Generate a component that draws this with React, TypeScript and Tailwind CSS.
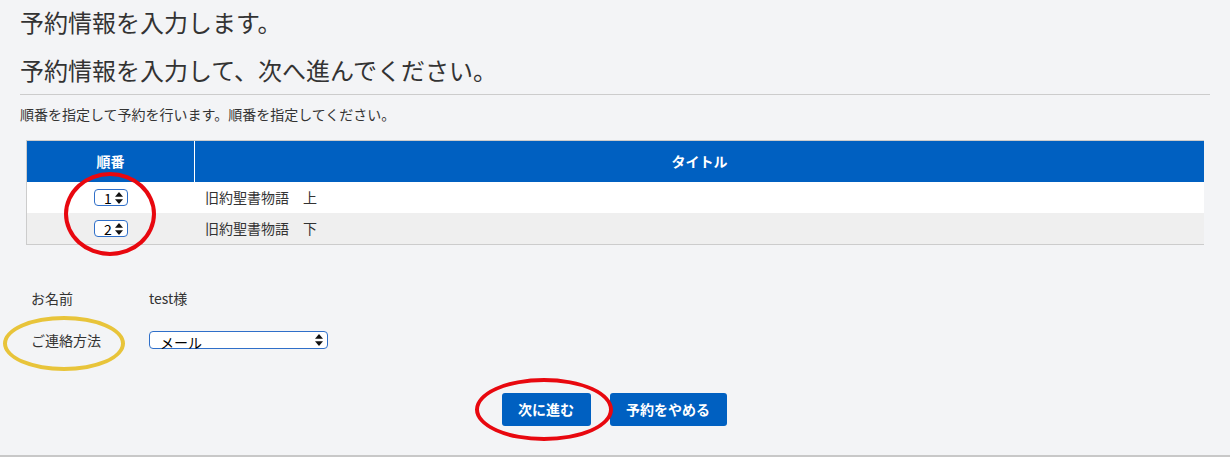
import React from 'react';

const font = { fontFamily: '"Noto Sans CJK JP", "Noto Sans", sans-serif' };

function UpDown() {
  return (
    <svg width="8" height="12" viewBox="0 0 8 12" className="shrink-0">
      <path d="M4 0 L8 4.8 L0 4.8 Z" fill="#111" />
      <path d="M4 12 L8 7.2 L0 7.2 Z" fill="#111" />
    </svg>
  );
}

function OrderSelect({ value }: { value: string }) {
  return (
    <div className="mx-auto flex h-[17px] w-[34px] items-center justify-between rounded-[4px] border border-[#2f6fc9] bg-white pl-[9px] pr-[4px]">
      <span className="text-[14px] leading-none text-black">{value}</span>
      <UpDown />
    </div>
  );
}

const rows = [
  { no: '1', title: '旧約聖書物語　上', bg: 'bg-white' },
  { no: '2', title: '旧約聖書物語　下', bg: 'bg-[#efefef]' },
];

export default function App() {
  return (
    <div className="relative h-[457px] w-[1230px] overflow-hidden bg-[#f3f4f6] text-[#333]" style={font}>
      <div className="px-[20px]">
        <h1 className="pt-[6px] text-[24px] leading-[32px]">予約情報を入力します。</h1>
        <h2 className="mt-[16px] text-[24px] leading-[32px]">予約情報を入力して、次へ進んでください。</h2>
        <div className="mt-[8px] h-px w-[1190px] bg-[#cccccc]" />
        <p className="mt-[10px] text-[14px] leading-[19px]">順番を指定して予約を行います。順番を指定してください。</p>

        {/* 予約テーブル */}
        <div className="ml-[6px] mt-[16px] w-[1178px] border-y border-l border-[#cccccc]">
          <div className="flex h-[41px] bg-[#0060c1] text-[14px] font-bold text-white">
            <div className="flex w-[168px] items-center justify-center border-r border-white">順番</div>
            <div className="flex flex-1 items-center justify-center">タイトル</div>
          </div>
          {rows.map((r) => (
            <div key={r.no} className={`flex h-[31px] items-center text-[14px] ${r.bg}`}>
              <div className="w-[168px]">
                <OrderSelect value={r.no} />
              </div>
              <div className="pl-[10px]">{r.title}</div>
            </div>
          ))}
        </div>

        {/* 入力欄 */}
        <div className="ml-[11px] mt-[43px] text-[14px]">
          <div className="flex h-[20px] items-center">
            <span className="w-[118px]">お名前</span>
            <span>test様</span>
          </div>
          <div className="mt-[22px] flex h-[20px] items-center">
            <span className="w-[118px]">ご連絡方法</span>
            <div className="flex h-[18px] w-[179px] items-end justify-between rounded-[4px] border border-[#2f6fc9] bg-white pl-[10px] pr-[4px]">
              <span className="translate-y-[3px] text-[14px] leading-[18px] text-black">メール</span>
              <span className="self-center"><UpDown /></span>
            </div>
          </div>
        </div>

        <div className="mt-[43px] flex justify-center gap-[19px] pr-[2px]">
          <button className="h-[33px] w-[89px] rounded-[3px] bg-[#0060c1] text-[14px] font-bold text-white">次に進む</button>
          <button className="h-[33px] w-[117px] rounded-[3px] bg-[#0060c1] text-[14px] font-bold text-white">予約をやめる</button>
        </div>
      </div>

      <div className="absolute bottom-0 left-0 h-[2px] w-full bg-[#c8c8c8]" />

      {/* 注釈の楕円 */}
      <div className="pointer-events-none absolute left-[64px] top-[172px] h-[84px] w-[92px] rounded-[50%] border-[4px] border-[#e8080f]" />
      <div className="pointer-events-none absolute left-[3px] top-[316px] h-[55px] w-[122px] rounded-[50%] border-[4px] border-[#e8c43a]" />
      <div className="pointer-events-none absolute left-[475px] top-[378px] h-[63px] w-[138px] rounded-[50%] border-[4px] border-[#e8080f]" />
    </div>
  );
}
